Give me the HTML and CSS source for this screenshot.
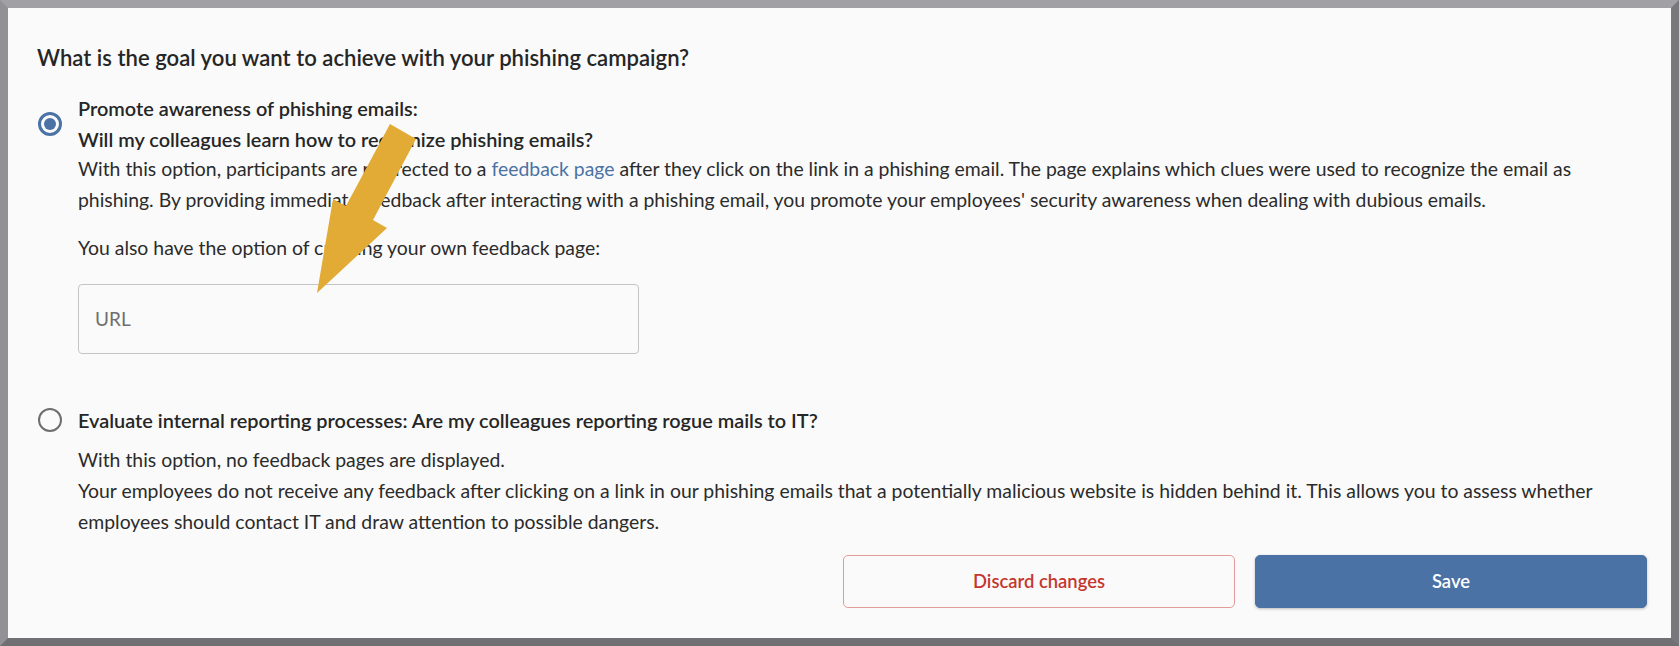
FILE: index.html
```html
<!DOCTYPE html>
<html lang="en">
<head>
<meta charset="utf-8">
<title>Phishing campaign goal</title>
<link rel="stylesheet" href="styles.css">
</head>
<body>
<div class="frame">
  <div class="panel">
    <h2 class="question">What is the goal you want to achieve with your phishing campaign?</h2>

    <div class="option">
      <span class="radio radio-checked"></span>
      <div class="option-title">Promote awareness of phishing emails:<br>Will my colleagues learn how to recognize phishing emails?</div>
      <div class="option-body">
        <p class="text">With this option, participants are redirected to a <a class="link" href="#">feedback page</a> after they click on the link in a phishing email. The page explains which clues were used to recognize the email as phishing. By providing immediate feedback after interacting with a phishing email, you promote your employees' security awareness when dealing with dubious emails.</p>
        <p class="text text-gap">You also have the option of creating your own feedback page:</p>
        <input class="url-input" type="text" placeholder="URL">
      </div>
    </div>

    <div class="option option-second">
      <span class="radio"></span>
      <div class="option-title">Evaluate internal reporting processes: Are my colleagues reporting rogue mails to IT?</div>
      <div class="option-body option-body-second">
        <p class="text">With this option, no feedback pages are displayed.<br>Your employees do not receive any feedback after clicking on a link in our phishing emails that a potentially malicious website is hidden behind it. This allows you to assess whether employees should contact IT and draw attention to possible dangers.</p>
      </div>
    </div>

    <div class="actions">
      <button class="btn btn-discard" type="button">Discard changes</button>
      <button class="btn btn-save" type="button">Save</button>
    </div>
  </div>

  <svg class="annotation" width="1679" height="646" viewBox="0 0 1679 646" aria-hidden="true">
    <polygon points="390,124 416,139 373,220 387,228 317,293 333,199 346,206" fill="#e1ab36"/>
  </svg>
</div>
</body>
</html>
```
FILE: styles.css
```css
* { box-sizing: border-box; }

html, body {
  margin: 0;
  padding: 0;
  background: #fafafa;
}

body {
  font-family: "Lato", "Liberation Sans", sans-serif;
  color: #2b2b2b;
}

.frame {
  position: relative;
  width: 1679px;
  height: 646px;
  border-style: solid;
  border-width: 8px;
  border-top-color: #a1a1a5;
  border-left-color: #919196;
  border-right-color: #77777c;
  border-bottom-color: #6f6f74;
  background: #fafafa;
}

.panel {
  padding: 35px 24px 0 29px;
}

.question {
  margin: 0;
  font-size: 22.1px;
  font-weight: 600;
  line-height: 30px;
  color: #262626;
}

.option {
  display: grid;
  grid-template-columns: 25px 1fr;
  column-gap: 16px;
  margin-top: 20px;
}

.option-second {
  margin-top: 51px;
}

.radio {
  grid-column: 1;
  grid-row: 1;
  align-self: center;
  width: 24px;
  height: 24px;
  margin-left: 1px;
  border-radius: 50%;
  border: 2.5px solid #6e6e6e;
  background: #fafafa;
  display: flex;
  align-items: center;
  justify-content: center;
}

.radio-checked {
  border: 3px solid #4a72a5;
}

.radio-checked::after {
  content: "";
  width: 12px;
  height: 12px;
  border-radius: 50%;
  background: #4a72a5;
}

.option-title {
  grid-column: 2;
  grid-row: 1;
  font-size: 19.9px;
  font-weight: 600;
  line-height: 30.6px;
  color: #262626;
}

.option-body {
  grid-column: 2;
  grid-row: 2;
}

.option-body-second {
  margin-top: 8px;
}

.option-body-second .text {
  line-height: 31px;
}

.text {
  margin: 0;
  font-size: 19.4px;
  line-height: 30.6px;
  color: #2b2b2b;
}

.text-gap {
  margin-top: 18px;
}

.link {
  color: #4a72a5;
  text-decoration: none;
}

.url-input {
  display: block;
  margin-top: 20px;
  width: 561px;
  height: 70px;
  padding: 0 16px;
  border: 1px solid #c4c4c4;
  border-radius: 4px;
  background: #fafafa;
  font-family: "Lato", "Liberation Sans", sans-serif;
  font-size: 19px;
  color: #2b2b2b;
}

.url-input::placeholder {
  color: #6f6f6f;
}

.actions {
  display: flex;
  justify-content: flex-end;
  gap: 20px;
  margin-top: 18px;
}

.btn {
  width: 392px;
  height: 53px;
  border-radius: 5px;
  font-family: "Lato", "Liberation Sans", sans-serif;
  font-size: 18.4px;
  font-weight: 600;
  cursor: pointer;
}

.btn-discard {
  background: #fafafa;
  border: 1px solid #e29a9a;
  color: #c4372e;
}

.btn-save {
  background: #4a72a5;
  border: 1px solid #4a72a5;
  color: #ffffff;
  box-shadow: 0 1px 3px rgba(0, 0, 0, 0.25);
}

.annotation {
  position: absolute;
  left: -8px;
  top: -8px;
  pointer-events: none;
}
```
